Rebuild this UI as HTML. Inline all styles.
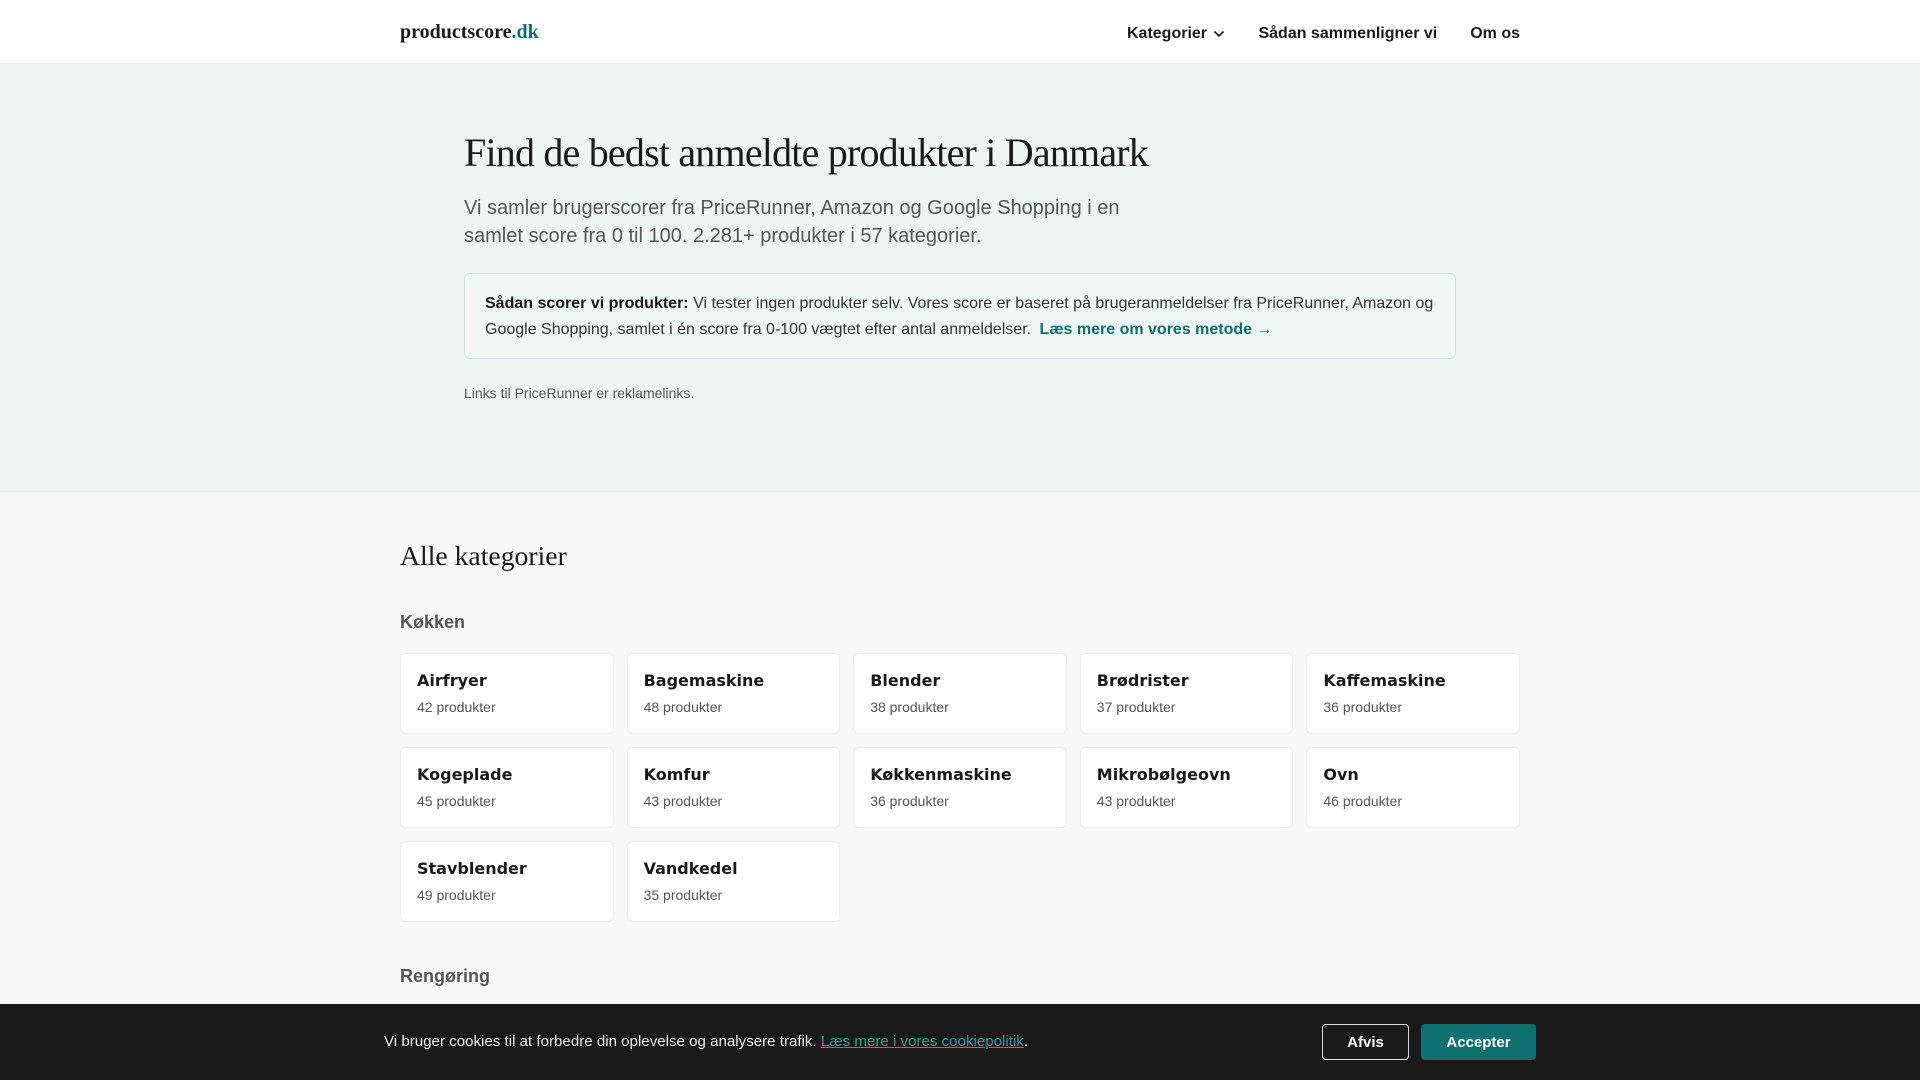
<!DOCTYPE html>
<html><head><meta charset="utf-8"><style>
*{box-sizing:border-box;margin:0;padding:0}
body{width:1920px;height:1080px;overflow:hidden;background:#f8f8f8;font-family:"Liberation Sans",sans-serif;color:#1a1a1a;position:relative}
header{height:64px;background:#fff;border-bottom:1px solid #e5e7e6;position:relative}
.logo{position:absolute;left:400px;top:21px;font-family:"Liberation Serif",serif;font-weight:bold;font-size:20px;color:#1a1a1a}
.logo span{color:#0f6e6e}
nav{position:absolute;right:400px;top:25px;font-size:16px;font-weight:bold;display:flex;gap:33px}
.hero{position:absolute;top:64px;left:0;width:1920px;height:428px;background:#eef6f4;border-bottom:1px solid #e2e8e6}
h1{position:absolute;left:464px;top:129px;font-family:"Liberation Serif",serif;font-weight:normal;font-size:40px;letter-spacing:-0.8px;color:#1a1a1a}
.lead{position:absolute;left:464px;top:194px;width:680px;font-size:20px;line-height:28px;color:#555}
.box{position:absolute;left:464px;top:273px;width:992px;height:86px;border:1px solid #c6e1de;border-radius:6px;background:#f0f8f6;padding:17px 20px;font-size:16px;line-height:26px;color:#333}
.box b{color:#1a1a1a}
.box a{color:#0f6e6e;font-weight:bold;text-decoration:none;margin-left:4px}
.small{position:absolute;left:464px;top:385px;font-size:14px;color:#555}
h2{position:absolute;left:400px;top:540px;font-family:"Liberation Serif",serif;font-weight:normal;font-size:27.7px}
h3{position:absolute;left:400px;font-size:18px;font-weight:bold;color:#555}
.grid{position:absolute;left:400px;top:653px;width:1120px;display:grid;grid-template-columns:repeat(5,1fr);column-gap:13px;row-gap:13px}
.card{height:81px;background:#fff;border:1px solid #ededed;border-radius:6px;padding:17px 16px}
.card .t{font-family:"DejaVu Sans",sans-serif;font-weight:bold;font-size:16px;line-height:20px}
.card .c{font-size:14px;color:#555;margin-top:8px}
.cookie{position:absolute;left:0;top:1004px;width:1920px;height:76px;background:#1a1a1a;color:#fff}
.cookie .txt{position:absolute;left:384px;top:29px;font-size:15.1px;color:#eee}
.cookie .txt a{color:#2a9d9d;text-decoration:underline}
.btn{position:absolute;top:20px;height:36px;border-radius:4px;font-size:15px;font-weight:bold;display:flex;align-items:center;justify-content:center;color:#fff}
</style></head><body>
<header><div class="logo">productscore<span>.dk</span></div>
<nav><span>Kategorier <svg width="12" height="8" viewBox="0 0 12 8" style="margin-left:2px"><path d="M1.5 1.5 6 6l4.5-4.5" fill="none" stroke="#1a1a1a" stroke-width="1.6"/></svg></span><span>Sådan sammenligner vi</span><span>Om os</span></nav></header>
<div class="hero"></div>
<h1>Find de bedst anmeldte produkter i Danmark</h1>
<div class="lead">Vi samler brugerscorer fra PriceRunner, Amazon og Google Shopping i en samlet score fra 0 til 100. 2.281+ produkter i 57 kategorier.</div>
<div class="box"><b>Sådan scorer vi produkter:</b> Vi tester ingen produkter selv. Vores score er baseret på brugeranmeldelser fra PriceRunner, Amazon og Google Shopping, samlet i én score fra 0-100 vægtet efter antal anmeldelser. <a>Læs mere om vores metode →</a></div>
<div class="small">Links til PriceRunner er reklamelinks.</div>
<h2>Alle kategorier</h2>
<h3 style="top:612px">Køkken</h3>
<div class="grid">
<div class="card"><div class="t">Airfryer</div><div class="c">42 produkter</div></div>
<div class="card"><div class="t">Bagemaskine</div><div class="c">48 produkter</div></div>
<div class="card"><div class="t">Blender</div><div class="c">38 produkter</div></div>
<div class="card"><div class="t">Brødrister</div><div class="c">37 produkter</div></div>
<div class="card"><div class="t">Kaffemaskine</div><div class="c">36 produkter</div></div>
<div class="card"><div class="t">Kogeplade</div><div class="c">45 produkter</div></div>
<div class="card"><div class="t">Komfur</div><div class="c">43 produkter</div></div>
<div class="card"><div class="t">Køkkenmaskine</div><div class="c">36 produkter</div></div>
<div class="card"><div class="t">Mikrobølgeovn</div><div class="c">43 produkter</div></div>
<div class="card"><div class="t">Ovn</div><div class="c">46 produkter</div></div>
<div class="card"><div class="t">Stavblender</div><div class="c">49 produkter</div></div>
<div class="card"><div class="t">Vandkedel</div><div class="c">35 produkter</div></div>
</div>
<h3 style="top:966px">Rengøring</h3>
<div class="cookie"><div class="txt">Vi bruger cookies til at forbedre din oplevelse og analysere trafik. <a>Læs mere i vores cookiepolitik</a>.</div>
<div class="btn" style="left:1322px;width:87px;border:1px solid #ddd">Afvis</div>
<div class="btn" style="left:1421px;width:115px;background:#0f6e6e">Accepter</div></div>
</body></html>
